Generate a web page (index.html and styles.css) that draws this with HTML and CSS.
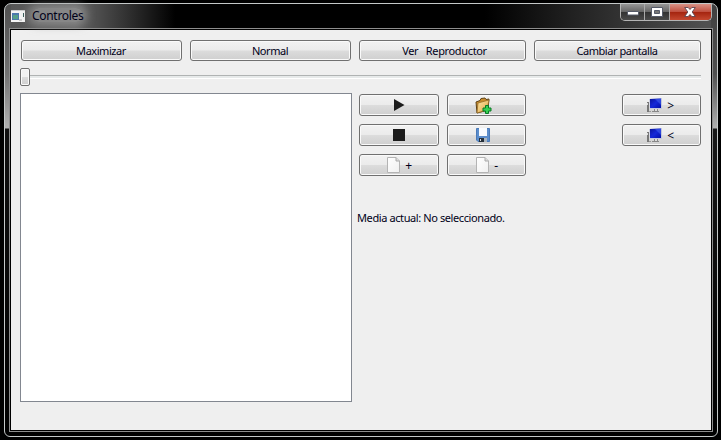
FILE: index.html
```html
<!DOCTYPE html>
<html lang="es">
<head>
<meta charset="utf-8">
<title>Controles</title>
<link rel="stylesheet" href="styles.css">
</head>
<body>
<svg class="defs" width="0" height="0">
  <defs>
    <linearGradient id="page" x1="0" y1="0" x2="1" y2="1"><stop offset="0" stop-color="#fff"/><stop offset="1" stop-color="#f0f0f0"/></linearGradient>
    <linearGradient id="blue" x1="0" y1="0" x2="1" y2="1"><stop offset="0" stop-color="#0a149a"/><stop offset=".5" stop-color="#1428d8"/><stop offset="1" stop-color="#0210a8"/></linearGradient>
    <linearGradient id="gold" x1="0" y1="0" x2="1" y2="1"><stop offset="0" stop-color="#ffe9a8"/><stop offset="1" stop-color="#dfa040"/></linearGradient>
    <symbol id="doc" viewBox="0 0 16 18"><path d="M2.500 1.500h8.500l3.500 3.500v11.500h-12z" fill="url(#page)" stroke="#b4b4b4"/><path d="M11 1.500v3.500h3.500" fill="#ddd" stroke="#aaa"/></symbol>
    <symbol id="pc" viewBox="0 0 17 16"><path d="M1 5h2v10H1z" fill="#777"/><path d="M1 6h1v2H1z" fill="#ddd"/><path d="M3 14h2v1H3z" fill="#999"/><path d="M3 2 16 1v11H4z" fill="#c4c8dc"/><path d="M4 2 15 1.500V11H4z" fill="url(#blue)"/><path d="m9 2 6-.3V8z" fill="#4a6cf0" opacity=".5"/><path d="M8 12h4v2H8zM6 14h7v1H6z" fill="#888"/><path d="M9 12h2v2H9z" fill="#ddd"/></symbol>
  </defs>
</svg>
<div class="window">
  <header class="titlebar">
    <svg class="app-icon" width="14" height="12" viewBox="0 0 14 12"><path d="M0 0h14v12H0z" fill="#f4f4f4"/><path d="M0 0h14v1H0z" fill="#ccc"/><path d="M1 3h7v7H1z" fill="#4d78ad"/><path d="M2 5h5v4H2z" fill="#55a08a"/><path d="M12 3h1v4h-1z" fill="#345a55"/><path d="M8 9h3v2H8z" fill="#ccc"/></svg>
    <span class="title">Controles</span>
    <div class="caption">
      <span class="cap min"><svg width="12" height="5"><path d="M.5.5h11v3.500H.5z" fill="#fff" stroke="#555a68"/></svg></span>
      <span class="cap max"><svg width="12" height="10"><path d="M.5.5h11v9H.5z" fill="#fff" stroke="#555a68"/><path d="M3.500 3.500h5v3h-5z" fill="#777" stroke="#555a68"/></svg></span>
      <span class="cap close"><svg width="12" height="10" viewBox="0 0 12 10"><path d="M.7.5h3.500L6 2.500 7.800.5h3.500L8.200 5l3.100 4.500H7.800L6 7.500 4.200 9.500H.7L3.800 5z" fill="#fff" stroke="#5a4550" stroke-width=".9"/></svg></span>
    </div>
  </header>
  <main class="client">
    <div class="top-row">
      <button>Maximizar</button><button>Normal</button><button class="player">Ver &nbsp; Reproductor</button><button>Cambiar pantalla</button>
    </div>
    <div class="slider"><i class="thumb"></i><i class="track"></i></div>
    <div class="body">
      <div class="list"></div>
      <div class="side">
        <div class="pads">
          <button><svg class="play" width="12" height="14"><path d="M1 1 11.500 7 1 13z" fill="#1c1c1c"/></svg></button>
          <button><svg class="nudge" width="17" height="17" viewBox="0 0 17 17"><path d="M1 5 5 3.500 6 1.500 10 1l1 1.500 3-.5-1 11-11 3z" fill="#c98b2b" stroke="#5d4217"/><path d="m3 6 11-3-2 10-10 3z" fill="url(#gold)" stroke="#8b6422" stroke-width=".7"/><path d="M10.500 8.500h3v2.500H16v3h-2.500v2.500h-3V14H8v-3h2.500z" fill="#35cf52" stroke="#087a25"/></svg></button>
          <button class="last"><svg width="17" height="16"><use href="#pc"/></svg><b>&gt;</b></button>
          <button><svg class="stop" width="12" height="12"><path d="M0 0h12v12H0z" fill="#1c1c1c"/></svg></button>
          <button><svg class="nudge" width="16" height="16" viewBox="0 0 16 16"><path d="M1.500 1.500h13v13H3l-1.500-1.500z" fill="#5b8dcc" stroke="#4a7ab8"/><path d="M4 1h8v8H4z" fill="#f8fbff"/><path d="M4 11h8v4H4z" fill="#aab4bd"/><path d="M4 11h5v4H4z" fill="#26313b"/><path d="M5 12h1v2H5z" fill="#ddd"/></svg></button>
          <button class="last"><svg width="17" height="16"><use href="#pc"/></svg><b>&lt;</b></button>
          <button class="page"><svg width="16" height="18"><use href="#doc"/></svg><b>+</b></button>
          <button class="page"><svg width="16" height="18"><use href="#doc"/></svg><b>-</b></button>
        </div>
        <p class="status">Media actual: No seleccionado.</p>
      </div>
    </div>
  </main>
</div>
</body>
</html>
```
FILE: styles.css
```css
* { box-sizing: border-box; }
body { margin: 0; height: 440px; overflow: hidden; background: #000; padding: 3px 3px 3px 4px; font: 11px "Noto Sans", sans-serif; letter-spacing: -.4px; color: #000018; }
.defs { position: absolute; }
.window {
  width: 714px; height: 434px; border: 1px solid #c4c8c8; border-radius: 7px 7px 6px 6px; padding: 0 5px 5px;
  background:
    linear-gradient(#505050, #727272 70px, #b0b0b0 124px, #101010 125px, #000) left / 6px 100% no-repeat,
    linear-gradient(#404040, #505050 70px, #b0b0b0 124px, #181818 125px, #000) right / 6px 100% no-repeat,
    linear-gradient(90deg, #555 0, #646464 70px, #333 120px, #000 170px, #000 480px, #222 570px, #505050 700px) top / 100% 25px no-repeat,
    #000;
}
.titlebar { height: 24px; display: flex; padding: 0 1px 0 1px; }
.app-icon { margin-top: 6px; }
.title { font-size: 12px; line-height: 16px; height: 14px; margin: 4px 0 0 7px; letter-spacing: -.3px; border-radius: 8px; background: rgba(160,160,160,.6); box-shadow: 0 0 8px 4px rgba(160,160,160,.6); }
.caption { display: flex; margin-left: auto; margin-right: -1px; height: 17px; border: 1px solid #b4b4b4; border-top: 0; border-radius: 0 0 5px 5px; overflow: hidden; }
.cap { width: 25px; display: flex; align-items: center; justify-content: center; border-right: 1px solid #aaa; background: linear-gradient(#969696, #666 48%, #333 52%, #4a4a4a); }
.cap.min { width: 24px; padding-top: 4px; }
.cap.close { width: 41px; border: 0; background: linear-gradient(#d99286, #c05040 48%, #a52510 52%, #c44830); }
.cap svg { margin-top: -1px; }
.cap.close svg { margin-right: 2px; }
.client { height: 402px; border: 1px solid #000; outline: 1px solid #8d8d8d; background: #efefef; padding: 10px 10px 0 9px; margin-top: 1px; }
.top-row { display: grid; grid-template-columns: 161px 161px 167px 167px; column-gap: 8px; padding-left: 1px; }
button { font: inherit; letter-spacing: inherit; color: inherit; height: 21px; padding: 0; display: flex; align-items: center; justify-content: center; border: 1px solid #707070; border-radius: 3px; box-shadow: inset 0 0 0 1px #fafafa; background: linear-gradient(#f2f2f2, #ebebeb 48%, #dcdcdc 52%, #cfcfcf); white-space: pre; }
.top-row button { padding: 0 1px 1px 0; letter-spacing: -.45px; }
.top-row .player { padding: 0 0 1px 4px; letter-spacing: -.35px; }
.slider { display: flex; height: 18px; margin-top: 7px; }
.thumb { width: 10px; height: 18px; border: 1px solid #707070; border-radius: 2px; box-shadow: inset 0 0 0 1px #fafafa; background: linear-gradient(#f2f2f2 50%, #dcdcdc 52%, #cfcfcf); }
.track { flex: 1; height: 4px; margin-top: 7px; border-top: 1px solid #b0b3b3; border-bottom: 1px solid #fff; background: #e7eaea; }
.body { display: flex; margin-top: 7px; gap: 7px; }
.list { width: 332px; height: 309px; border: 1px solid #828790; background: #fff; }
.side { flex: 1; }
.pads { display: grid; grid-template-columns: 80px 79px 79px; grid-auto-rows: 22px; column-gap: 8px; row-gap: 8px; justify-content: start; padding-top: 1px; }
.pads button { height: 22px; }
.pads .last { margin-left: 88px; width: 79px; padding-right: 3px; }
.pads .page { padding-right: 1px; }
.pads b { font-weight: 400; font-size: 12px; margin-left: 4px; }
.play { margin-top: -1px; }
.stop { margin-right: 1px; }
.nudge { margin-right: 7px; }
.status { margin: 34px 0 0 -2px; line-height: 16px; white-space: nowrap; }
```
